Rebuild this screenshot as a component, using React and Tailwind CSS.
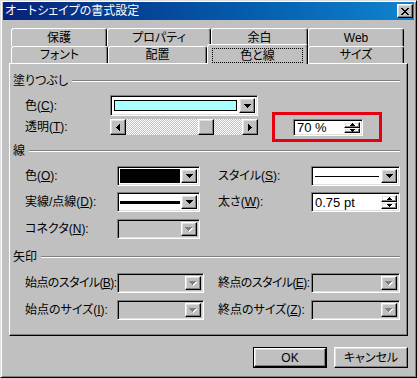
import React from 'react';

const font = "font-['Liberation_Sans','Noto_Sans_CJK_JP',sans-serif] [font-feature-settings:'palt']";
const raised = 'border border-t-white border-l-white border-r-black border-b-black shadow-[inset_-1px_-1px_#808080,inset_1px_1px_#dfdfdf]';
const sunken = 'border border-t-[#808080] border-l-[#808080] border-r-white border-b-white shadow-[inset_1px_1px_#000,inset_-1px_-1px_#dfdfdf]';
const dither = 'bg-[image:repeating-conic-gradient(#fff_0_25%,#c0c0c0_0_50%)] bg-[length:2px_2px]';

function Down({ disabled }) {
  if (disabled) {
    return (
      <svg width="8" height="5" shapeRendering="crispEdges">
        <path d="M1 1h7v1H1zM2 2h5v1H2zM3 3h3v1H3zM4 4h1v1H4z" fill="#fff" />
        <path d="M0 0h7v1H0zM1 1h5v1H1zM2 2h3v1H2zM3 3h1v1H3z" fill="#808080" />
      </svg>
    );
  }
  return (
    <svg width="7" height="4" shapeRendering="crispEdges">
      <path d="M0 0h7v1H0zM1 1h5v1H1zM2 2h3v1H2zM3 3h1v1H3z" fill="#000" />
    </svg>
  );
}

function Arrow({ dir }) {
  const d = dir === 'left'
    ? 'M3 0h1v7H3zM2 1h1v5H2zM1 2h1v3H1zM0 3h1v1H0z'
    : 'M0 0h1v7H0zM1 1h1v5H1zM2 2h1v3H2zM3 3h1v1H3z';
  return (
    <svg width="4" height="7" shapeRendering="crispEdges">
      <path d={d} fill="#000" />
    </svg>
  );
}

function SpinTri({ up }) {
  const d = up ? 'M2 0h1v1H2zM1 1h3v1H1zM0 2h5v1H0z' : 'M0 0h5v1H0zM1 1h3v1H1zM2 2h1v1H2z';
  return (
    <svg width="5" height="3" shapeRendering="crispEdges">
      <path d={d} fill="#000" />
    </svg>
  );
}

function DropBtn({ disabled }) {
  return (
    <div className={`w-[16px] shrink-0 bg-[#c0c0c0] ${raised} flex items-center justify-center`}>
      <Down disabled={disabled} />
    </div>
  );
}

function Combo({ className, disabled, children }) {
  return (
    <div className={`flex shrink-0 p-[2px] ${sunken} ${disabled ? 'bg-[#c0c0c0]' : 'bg-white'} ${className}`}>
      <div className="flex-1 flex flex-col justify-center">{children}</div>
      <DropBtn disabled={disabled} />
    </div>
  );
}

function SpinEdit({ value, className }) {
  return (
    <div className={`flex shrink-0 p-[2px] bg-white ${sunken} ${className}`}>
      <div className="flex-1 flex items-center pl-[1px] text-[13px]">{value}</div>
      <div className="w-[16px] flex flex-col">
        <div className={`flex-1 ${raised} flex items-center justify-center`}>
          <SpinTri up />
        </div>
        <div className={`flex-1 ${raised} flex items-center justify-center`}>
          <SpinTri />
        </div>
      </div>
    </div>
  );
}

function Header({ title, className }) {
  return (
    <div className={`flex items-center h-[14px] ${className}`}>
      <span>{title}</span>
      <div className="flex-1 ml-[4px] h-[2px] border-t border-t-[#808080] border-b border-b-white" />
    </div>
  );
}

function Label({ className, children }) {
  return <span className={`shrink-0 whitespace-nowrap ${className}`}>{children}</span>;
}

function Tab({ label, w, h, selected }) {
  if (selected) {
    return (
      <div className={`${w} h-[20px] -mt-[2px] relative z-10 bg-[#c0c0c0] border-t border-l border-white border-r border-r-black rounded-t-[3px] shadow-[inset_-1px_0_#808080] px-[4px] pt-[3px]`}>
        <div className="h-[15px] border border-dotted border-black flex items-center justify-center">
          {label}
        </div>
      </div>
    );
  }
  return (
    <div className={`${w} ${h} border-t border-l border-white border-r border-r-black rounded-t-[3px] shadow-[inset_-1px_0_#808080] flex items-center justify-center`}>
      {label}
    </div>
  );
}

export default function App() {
  return (
    <div className={`w-[417px] h-[378px] bg-[#c0c0c0] text-black text-[12px] leading-none ${font} border border-t-[#dfdfdf] border-l-[#dfdfdf] border-r-black border-b-black shadow-[inset_1px_1px_#fff,inset_-1px_-1px_#808080] px-[2px] pt-[1px] flex flex-col`}>
      {/* title bar */}
      <div className="h-[18px] bg-linear-to-r from-[#08217a] to-[#1084d0] flex items-center pl-[2px] pr-[1px]">
        <span className="flex-1 text-white text-[12px]">オートシェイプの書式設定</span>
        <div className={`w-[16px] h-[14px] bg-[#c0c0c0] ${raised} flex items-center justify-center`}>
          <svg width="8" height="7" shapeRendering="crispEdges">
            <path d="M0 0h2v1H0zM6 0h2v1H6zM1 1h2v1H1zM5 1h2v1H5zM2 2h4v1H2zM3 3h2v1H3zM2 4h4v1H2zM1 5h2v1H1zM5 5h2v1H5zM0 6h2v1H0zM6 6h2v1H6z" fill="#000" />
          </svg>
        </div>
      </div>

      <div className="px-[6px] flex flex-col">
        {/* tabs */}
        <div className="mt-[8px] ml-[2px] flex flex-col">
          <div className="flex">
            <Tab label="保護" w="w-[96px]" h="h-[18px]" />
            <Tab label="プロパティ" w="w-[104px]" h="h-[18px]" />
            <Tab label="余白" w="w-[97px]" h="h-[18px]" />
            <Tab label="Web" w="w-[96px]" h="h-[18px]" />
          </div>
          <div className="flex h-[17px] items-start">
            <Tab label="フォント" w="w-[97px]" h="h-[17px]" />
            <Tab label="配置" w="w-[99px]" h="h-[17px]" />
            <Tab label="色と線" w="w-[101px]" selected />
            <Tab label="サイズ" w="w-[96px]" h="h-[17px]" />
          </div>
        </div>

        {/* panel */}
        <div className="h-[273px] border-t border-l border-white border-r border-b border-r-black border-b-black shadow-[inset_-1px_-1px_#808080] pl-[3px] pr-[7px] flex flex-col">
          <Header title="塗りつぶし" className="mt-[10px]" />
          <div className="mt-[7px] h-[21px] flex items-center pl-[12px]">
            <Label className="w-[85px]">色(<u>C</u>):</Label>
            <Combo className="w-[148px] h-[21px]">
              <div className="flex-1 my-[2px] ml-[1px] mr-[2px] border border-black bg-[#aaffff]" />
            </Combo>
          </div>
          <div className="mt-[3px] h-[16px] flex items-center pl-[12px]">
            <Label className="w-[85px]">透明(<u>T</u>):</Label>
            <div className="w-[148px] h-[16px] flex">
              <div className={`w-[16px] ${raised} flex items-center justify-center`}>
                <Arrow dir="left" />
              </div>
              <div className={`flex-1 flex ${dither}`}>
                <div className={`ml-[72px] w-[16px] bg-[#c0c0c0] ${raised}`} />
              </div>
              <div className={`w-[16px] ${raised} flex items-center justify-center`}>
                <Arrow dir="right" />
              </div>
            </div>
            <div className="ml-[14px] -my-[7px] border-[3px] border-[#e60012] pl-[18px] pr-[16px] pt-[4px] pb-[3px]">
              <SpinEdit value="70 %" className="w-[70px] h-[17px]" />
            </div>
          </div>

          <Header title="線" className="mt-[9px]" />
          <div className="mt-[8px] h-[20px] flex items-center pl-[12px]">
            <Label className="w-[92px]">色(<u>O</u>):</Label>
            <Combo className="w-[83px] h-[20px]">
              <div className="flex-1 mr-[1px] bg-black" />
            </Combo>
            <Label className="ml-[18px] w-[93px]">スタイル(<u>S</u>):</Label>
            <Combo className="w-[89px] h-[20px]">
              <div className="h-[1px] ml-[1px] mr-[2px] bg-black" />
            </Combo>
          </div>
          <div className="mt-[6px] h-[20px] flex items-center pl-[12px]">
            <Label className="w-[92px]">実線/点線(<u>D</u>):</Label>
            <Combo className="w-[83px] h-[20px]">
              <div className="h-[3px] mr-[1px] bg-black" />
            </Combo>
            <Label className="ml-[18px] w-[93px]">太さ(<u>W</u>):</Label>
            <SpinEdit value="0.75 pt" className="w-[89px] h-[20px]" />
          </div>
          <div className="mt-[7px] h-[20px] flex items-center pl-[12px]">
            <Label className="w-[92px]">コネクタ(<u>N</u>):</Label>
            <Combo className="w-[83px] h-[20px]" disabled />
          </div>

          <Header title="矢印" className="mt-[11px]" />
          <div className="mt-[9px] h-[20px] flex items-center pl-[12px]">
            <Label className="w-[92px] tracking-[-0.6px]">始点のスタイル(<u>B</u>):</Label>
            <Combo className="w-[87px] h-[20px]" disabled />
            <Label className="ml-[14px] w-[93px] tracking-[-0.6px]">終点のスタイル(<u>E</u>):</Label>
            <Combo className="w-[89px] h-[20px]" disabled />
          </div>
          <div className="mt-[7px] h-[20px] flex items-center pl-[12px]">
            <Label className="w-[92px]">始点のサイズ(<u>I</u>):</Label>
            <Combo className="w-[87px] h-[20px]" disabled />
            <Label className="ml-[14px] w-[93px]">終点のサイズ(<u>Z</u>):</Label>
            <Combo className="w-[89px] h-[20px]" disabled />
          </div>
        </div>

        {/* buttons */}
        <div className="mt-[11px] flex justify-end gap-[7px]">
          <div className="w-[74px] h-[21px] border border-black flex">
            <div className={`flex-1 ${raised} flex items-center justify-center`}>OK</div>
          </div>
          <div className={`w-[74px] h-[21px] ${raised} flex items-center justify-center`}>キャンセル</div>
        </div>
      </div>
    </div>
  );
}
